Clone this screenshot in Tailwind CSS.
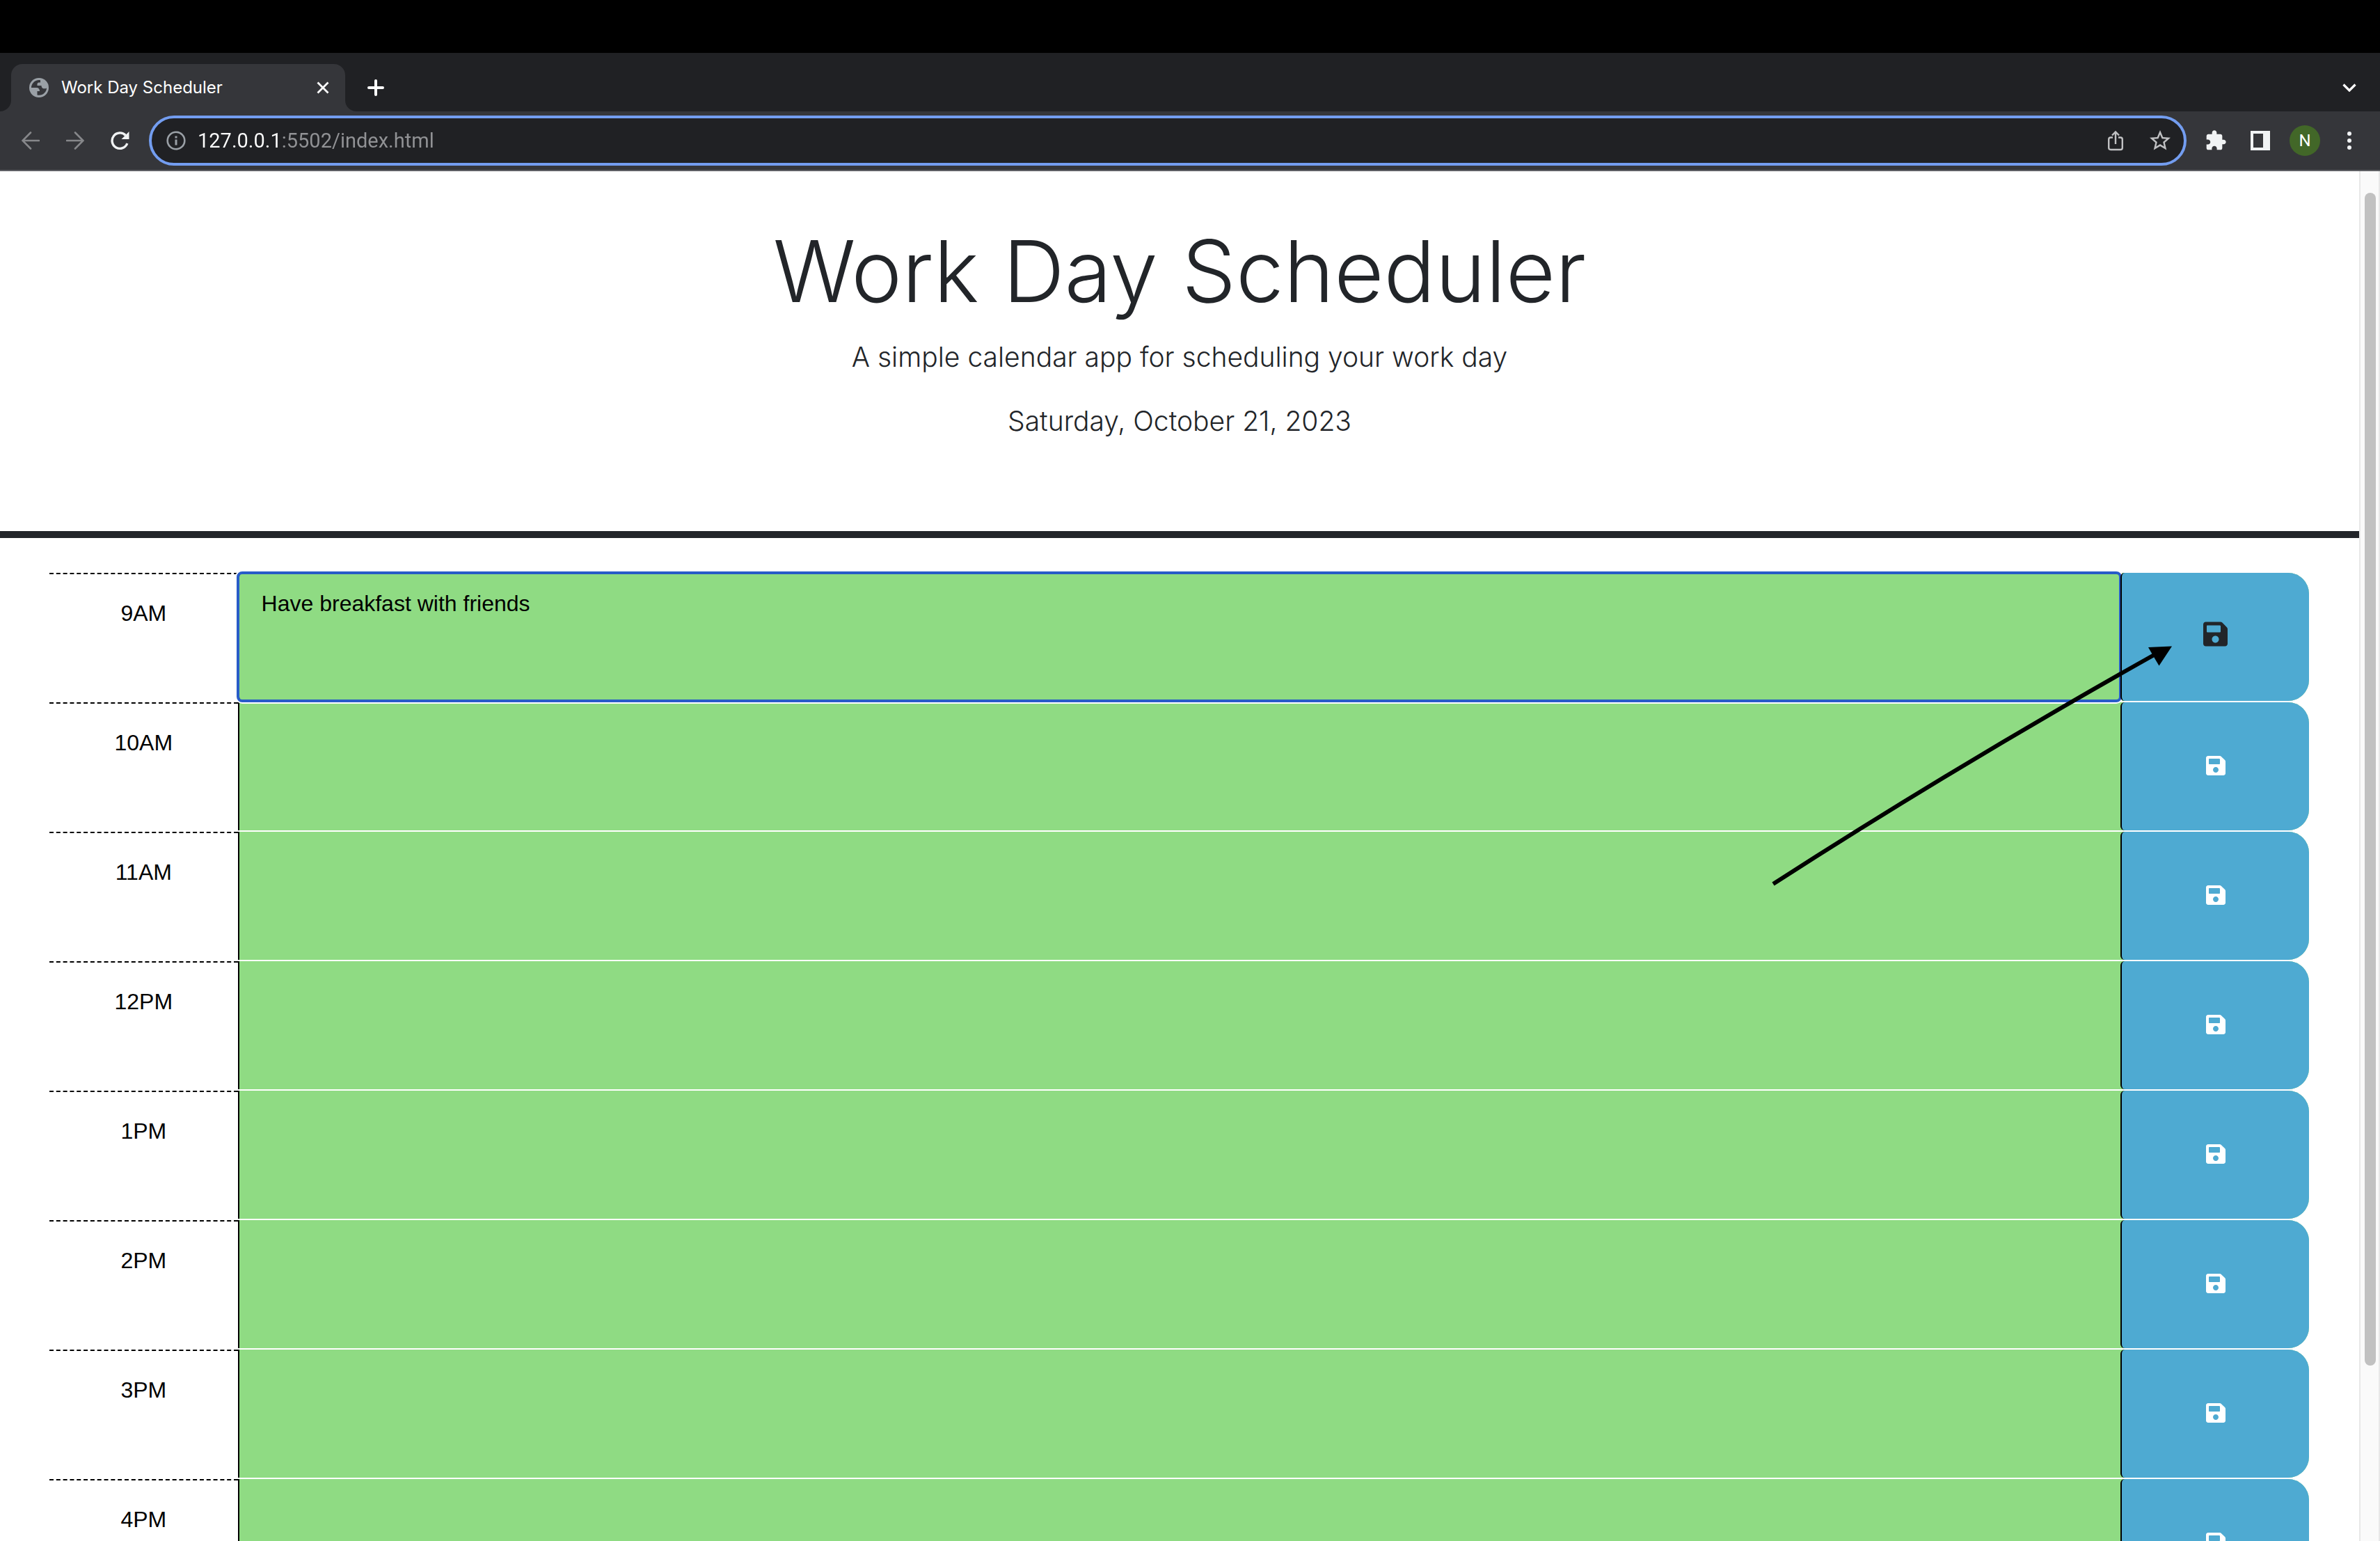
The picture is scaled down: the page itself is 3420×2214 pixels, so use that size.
<!DOCTYPE html>
<html lang="en">
<head>
<meta charset="utf-8">
<title>Work Day Scheduler</title>
<script src="https://cdn.jsdelivr.net/npm/@tailwindcss/browser@4"></script>
</head>
<body class="flex h-screen flex-col overflow-hidden bg-white font-['Liberation_Sans',Arial,sans-serif] text-[#222529]">

  <!-- Icons shared by every row -->
  <svg class="hidden" aria-hidden="true">
    <symbol id="save" viewBox="0 0 448 512">
      <path fill="currentColor" d="M433.941 129.941l-83.882-83.882A48 48 0 0 0 316.118 32H48C21.49 32 0 53.49 0 80v352c0 26.51 21.49 48 48 48h352c26.51 0 48-21.49 48-48V163.882a48 48 0 0 0-14.059-33.941zM224 416c-35.346 0-64-28.654-64-64 0-35.346 28.654-64 64-64s64 28.654 64 64c0 35.346-28.654 64-64 64zm96-304.52V212c0 6.627-5.373 12-12 12H76c-6.627 0-12-5.373-12-12V108c0-6.627 5.373-12 12-12h228.52c3.183 0 6.235 1.264 8.485 3.515l3.48 3.48A11.996 11.996 0 0 1 320 111.48z"/>
    </symbol>
  </svg>

  <div class="h-[76px] shrink-0 bg-black"></div>

  <!-- Tab strip -->
  <div class="flex h-[84px] shrink-0 items-end bg-[#202124] px-4 text-white">
    <div class="relative flex h-[68px] w-[480px] items-center rounded-t-2xl bg-[#35363a] pl-[26px] pr-[18px]">
      <svg class="absolute bottom-0 -left-4 size-4 text-[#35363a]" viewBox="0 0 16 16"><path fill="currentColor" d="M16 0v16H0A16 16 0 0 0 16 0z"/></svg>
      <svg class="absolute bottom-0 -right-4 size-4 text-[#35363a]" viewBox="0 0 16 16"><path fill="currentColor" d="M0 0v16h16A16 16 0 0 1 0 0z"/></svg>
      <svg class="size-7" viewBox="0 0 28 28">
        <circle cx="14" cy="14" r="14" fill="#9aa0a6"/>
        <path fill="#35363a" d="M16 3.200C10 2 4.500 6 3 12.500V14h7.500c3 0 4.500 2 4.500 5h-3.500v5.500C19 26 25 20.500 25 14.500c-2 1.500-7.500 1.500-7.500-3.500h-6V9c0-1.500 1-2.500 2.500-2.500h2z"/>
      </svg>
      <span class="ml-[18px] flex-1 font-[Inter,sans-serif] text-2xl">Work Day Scheduler</span>
      <button class="flex size-7 items-center justify-center" aria-label="Close tab">
        <svg class="size-[18px]" viewBox="0 0 18 18" fill="none" stroke="currentColor" stroke-width="2.800"><path d="M1.500 1.500l15 15M16.500 1.500l-15 15"/></svg>
      </button>
    </div>
    <button class="ml-[30px] flex h-[68px] w-7 items-center justify-center" aria-label="New tab">
      <svg class="size-6" viewBox="0 0 24 24" fill="none" stroke="currentColor" stroke-width="4" stroke-linecap="round"><path d="M12 2v20M2 12h20"/></svg>
    </button>
    <button class="ml-auto flex h-[68px] w-14 items-center justify-center" aria-label="Search tabs">
      <svg class="h-3 w-5" viewBox="0 0 20 12" fill="none" stroke="currentColor" stroke-width="3.200"><path d="M1.500 1.500L10 10l8.500-8.500"/></svg>
    </button>
  </div>

  <!-- Toolbar -->
  <div class="flex h-[86px] shrink-0 items-center border-b-2 border-[#5f6064] bg-[#35363a] px-3 text-[#f1f3f4]">
    <button class="flex h-16 w-16 items-center justify-center text-[#86878a]" aria-label="Back">
      <svg class="size-[26px]" viewBox="0 0 26 26" fill="none" stroke="currentColor" stroke-width="2.600" stroke-linecap="round"><path d="M25 13H2M13 1.500L1.500 13 13 24.500"/></svg>
    </button>
    <button class="flex h-16 w-16 items-center justify-center text-[#86878a]" aria-label="Forward">
      <svg class="size-[26px]" viewBox="0 0 26 26" fill="none" stroke="currentColor" stroke-width="2.600" stroke-linecap="round"><path d="M1 13h23M13 1.500L24.500 13 13 24.500"/></svg>
    </button>
    <button class="flex h-16 w-16 items-center justify-center" aria-label="Reload">
      <svg class="size-7" viewBox="0 0 28 28"><path fill="none" stroke="currentColor" stroke-width="3.400" d="M22.500 6.500A11.200 11.200 0 1 0 24.800 18"/><path fill="currentColor" d="M27.500 1v11H16.500z"/></svg>
    </button>

    <div class="mx-[10px] flex h-[72px] flex-1 items-center rounded-full border-4 border-[#739df0] bg-[#202124] pl-[21px] pr-[2px] text-[#c0c1c3]">
      <svg class="size-7 text-[#9aa0a6]" viewBox="0 0 28 28" fill="none" stroke="currentColor" stroke-width="2.600"><circle cx="14" cy="14" r="12.300"/><path stroke-width="3" d="M14 12.500v8M14 7.500v3"/></svg>
      <input type="text" aria-label="Address" value="127.0.0.1:5502/index.html" class="ml-[17px] min-w-0 flex-1 bg-linear-to-r from-white from-[120px] to-[#919295] to-[120px] bg-clip-text font-[Roboto,sans-serif] text-[29px] leading-10 text-transparent outline-none">
      <button class="flex h-16 w-16 items-center justify-center" aria-label="Share">
        <svg class="h-[30px] w-6" viewBox="0 0 24 30" fill="none" stroke="currentColor" stroke-width="2.400"><path d="M8 10.500H5a2.800 2.800 0 0 0-2.800 2.800v12A2.800 2.800 0 0 0 5 28h14a2.800 2.800 0 0 0 2.800-2.800v-12A2.800 2.800 0 0 0 19 10.500h-3M12 20V2.500M7 7.500l5-5 5 5"/></svg>
      </button>
      <button class="flex h-16 w-16 items-center justify-center" aria-label="Bookmark this tab">
        <svg class="size-9" viewBox="0 0 24 24"><path fill="currentColor" d="M22 9.240l-7.190-.62L12 2 9.190 8.630 2 9.240l5.460 4.730L5.820 21 12 17.270 18.180 21l-1.630-7.030L22 9.240zM12 15.400l-3.760 2.270 1-4.280-3.320-2.880 4.380-.38L12 6.100l1.710 4.040 4.380.38-3.320 2.880 1 4.280L12 15.400z"/></svg>
      </button>
    </div>

    <button class="flex h-16 w-16 items-center justify-center" aria-label="Extensions">
      <svg class="size-8" viewBox="0 0 24 24"><path fill="currentColor" d="M20.500 11H19V7c0-1.100-.9-2-2-2h-4V3.500C13 2.120 11.880 1 10.500 1S8 2.120 8 3.500V5H4c-1.100 0-1.990.9-1.990 2v3.800H3.500c1.490 0 2.700 1.210 2.700 2.700s-1.210 2.700-2.700 2.700H2V20c0 1.100.9 2 2 2h3.800v-1.500c0-1.490 1.210-2.700 2.700-2.700 1.490 0 2.700 1.210 2.700 2.700V22H17c1.100 0 2-.9 2-2v-4h1.500c1.380 0 2.500-1.120 2.500-2.500S21.880 11 20.500 11z"/></svg>
    </button>
    <button class="flex h-16 w-16 items-center justify-center" aria-label="Side panel">
      <svg class="size-7" viewBox="0 0 28 28"><path fill="currentColor" fill-rule="evenodd" d="M0 0h28v28H0zM4 4v20h14V4z"/></svg>
    </button>
    <button class="flex h-16 w-16 items-center justify-center" aria-label="Profile">
      <span class="flex size-11 items-center justify-center rounded-full bg-[#426728] font-[Roboto,sans-serif] text-2xl text-white">N</span>
    </button>
    <button class="flex h-16 w-16 items-center justify-center" aria-label="Menu">
      <svg class="h-[26px] w-[6px]" viewBox="0 0 6 26" fill="currentColor"><circle cx="3" cy="3" r="3"/><circle cx="3" cy="13" r="3"/><circle cx="3" cy="23" r="3"/></svg>
    </button>
  </div>

  <!-- Viewport -->
  <div class="flex min-h-0 flex-1">
    <div class="relative min-w-0 flex-1 overflow-hidden">
      <header class="border-b-[10px] border-[#222529] px-8 pt-[67px] pb-32 text-center font-[Inter,sans-serif] font-light">
        <h1 class="text-[123px] leading-[154px]">Work Day Scheduler</h1>
        <p class="mt-4 text-[39px] leading-[60px]">A simple calendar app for scheduling your work day</p>
        <p class="mt-8 text-[39px] leading-[60px]">Saturday, October 21, 2023</p>
      </header>

      <main id="schedule" class="flex flex-col gap-[2px] pl-[71px] pr-[72px] pt-[50px] text-[32px] leading-[48px] text-black"></main>

      <!-- Arrow pointing at the first save button -->
      <svg class="pointer-events-none absolute top-[674px] right-[260px] z-30 h-[360px] w-[590px]" viewBox="0 0 590 360">
        <path fill="none" stroke="#000" stroke-width="6" d="M8 350Q277 177 557 20"/>
        <path d="M581 8.500L547 10l7.500 13 8 13.500z"/>
      </svg>
    </div>

    <div class="w-[30px] border-x-2 border-[#e8e8e8] bg-[#fafafa] px-[6px] pt-[31px]">
      <div class="h-[87%] w-4 rounded-full bg-[#c1c1c1]"></div>
    </div>
  </div>

<script>
  const hours = ['9AM', '10AM', '11AM', '12PM', '1PM', '2PM', '3PM', '4PM'];
  document.getElementById('schedule').innerHTML = hours.map((hour, i) => `
    <section class="grid h-[184px] shrink-0 grid-cols-[1fr_10fr_1fr] rounded-r-[30px] bg-[#8fdb83]">
      <label for="hour-${i}" class="border-t-2 border-dashed border-black bg-white pt-8 text-center">${hour}</label>
      <textarea id="hour-${i}" class="${i === 0
        ? 'relative z-10 rounded-[6px] outline-4 -outline-offset-2 outline-[#285cc8] shadow-[0_0_0_4px_#fff] bg-[#8fdb83]'
        : 'outline-none'} h-full resize-none overflow-hidden border-l-2 border-black py-5 px-8">${i === 0 ? 'Have breakfast with friends' : ''}</textarea>
      <button aria-label="Save ${hour}" class="relative z-20 flex items-center justify-center rounded-l-[6px] rounded-r-[30px] border-l-2 border-black bg-[#4eaad2] ${i === 0 ? 'pb-2 text-[#222529]' : 'pb-[2px] text-white'}">
        <svg class="${i === 0 ? 'h-10 w-[35px]' : 'h-8 w-7'}"><use href="#save"/></svg>
      </button>
    </section>`).join('');
</script>
</body>
</html>
